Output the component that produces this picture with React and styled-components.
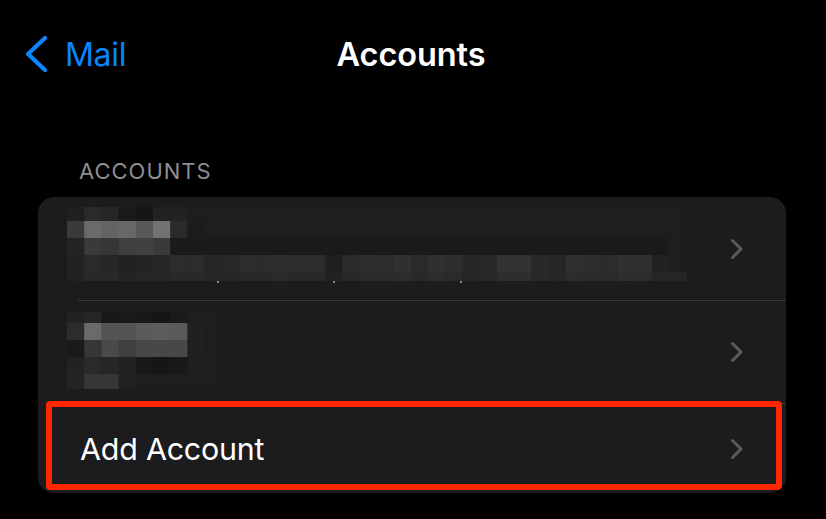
import React from "react";
import styled, { createGlobalStyle } from "styled-components";

const GlobalStyle = createGlobalStyle`
  html, body {
    margin: 0;
    padding: 0;
    background: #000;
  }
  body {
    font-family: "Inter", "Liberation Sans", sans-serif;
    -webkit-font-smoothing: antialiased;
  }
`;

const Screen = styled.div`
  width: 826px;
  height: 519px;
  overflow: hidden;
  background: #000;
  display: flex;
  flex-direction: column;
`;

const NavBar = styled.div`
  height: 108px;
  display: grid;
  grid-template-columns: 1fr auto 1fr;
  align-items: center;
`;

const BackButton = styled.div`
  display: flex;
  align-items: center;
  gap: 17px;
  margin-left: 24px;
  color: #0a84ff;
  font-size: 32px;
  font-weight: 400;
  letter-spacing: -0.3px;
`;

const Title = styled.div`
  color: #fff;
  font-size: 32.5px;
  font-weight: 600;
  letter-spacing: -0.1px;
  margin-right: 4px;
`;

const SectionHeader = styled.div`
  color: #8d8d93;
  font-size: 22px;
  letter-spacing: 1px;
  padding: 50px 0 0 79px;
  line-height: 26px;
`;

const Card = styled.div`
  margin: 13px 40px 0 38px;
  background: #1c1c1e;
  border-radius: 16px;
  overflow: hidden;
  display: flex;
  flex-direction: column;
`;

const Row = styled.div`
  position: relative;
  height: ${(p) => p.$height}px;
  display: flex;
  align-items: center;
  padding: 0 42px 0 ${(p) => (p.$label ? 42 : 29)}px;
`;

const Separator = styled.div`
  height: 1px;
  margin-left: 40px;
  background: #3a3a3c;
`;

const RowBody = styled.div`
  flex: 1;
  align-self: stretch;
  display: flex;
  align-items: ${(p) => (p.$label ? "center" : "flex-start")};
  padding-top: ${(p) => p.$offset || 0}px;
`;

const Label = styled.span`
  color: #fff;
  font-size: 30.4px;
  letter-spacing: -0.2px;
`;

const Highlight = styled.div`
  position: absolute;
  left: 8px;
  right: 4px;
  top: -3px;
  bottom: 3px;
  border: 6px solid #ff2600;
  border-radius: 4px;
  pointer-events: none;
`;

const Chevron = () => (
  <svg width="14" height="22" viewBox="0 0 14 22">
    <path
      d="M2.5 2.5 L11 11 L2.5 19.5"
      fill="none"
      stroke="#5b5b5f"
      strokeWidth="3"
      strokeLinecap="round"
      strokeLinejoin="round"
    />
  </svg>
);

const BackChevron = () => (
  <svg width="24" height="38" viewBox="0 0 24 38">
    <path
      d="M21 3 L4 19 L21 35"
      fill="none"
      stroke="#0a84ff"
      strokeWidth="4.2"
      strokeLinecap="round"
      strokeLinejoin="round"
    />
  </svg>
);

// pixelated (redacted) account details
const CELL = 17.2;

const firstAccount = [
  { h: 14, v: [32, 42, 38, 26, 22, 34, 34, 30, 30, 30, 30, 30, 30, 30, 30, 30, 30, 30, 30, 30, 30, 30, 30, 30, 30, 30, 30, 30, 30, 30, 30, 30, 30, 30, 30, 30] },
  { h: 17, v: [58, 106, 100, 104, 88, 114, 42, 28, 30, 30, 30, 30, 30, 30, 30, 30, 30, 30, 30, 30, 30, 30, 30, 30, 30, 30, 30, 30, 30, 30, 30, 30, 30, 30, 30, 30] },
  { h: 17, v: [36, 58, 54, 64, 64, 58, 26, 26, 27, 26, 26, 26, 27, 26, 26, 26, 27, 26, 26, 26, 26, 27, 26, 26, 26, 26, 26, 27, 26, 26, 26, 26, 26, 27, 26, 30] },
  { h: 17, v: [34, 42, 38, 34, 36, 38, 44, 44, 38, 40, 44, 44, 46, 44, 44, 31, 42, 46, 44, 48, 42, 48, 46, 38, 40, 50, 50, 40, 38, 48, 46, 44, 48, 48, 34, 30] },
  { h: 9, v: [34, 40, 40, 36, 38, 38, 40, 40, 38, 38, 40, 40, 42, 40, 40, 34, 40, 42, 42, 44, 40, 44, 42, 38, 40, 46, 46, 40, 38, 44, 42, 42, 46, 44, 38, 38] },
];

const secondAccount = [
  { h: 11, v: [34, 38, 24, 26, 24, 22, 26, 30, 30] },
  { h: 17, v: [44, 106, 84, 84, 90, 92, 90, 32, 30] },
  { h: 17, v: [26, 54, 74, 64, 72, 72, 72, 32, 30] },
  { h: 17, v: [34, 42, 38, 34, 24, 22, 24, 30, 30] },
  { h: 15, v: [36, 54, 54, 34, 30, 30, 30, 30, 30] },
];

const gray = (n) => `rgb(${n},${n},${n + 2})`;

const Pixelated = ({ rows, dots = [] }) => {
  const cols = rows[0].v.length;
  const width = Math.ceil(cols * CELL);
  const height = rows.reduce((s, r) => s + r.h, 0);
  let y = 0;
  const cells = [];
  rows.forEach((r, ri) => {
    r.v.forEach((n, ci) => {
      cells.push(
        <rect key={`${ri}-${ci}`} x={ci * CELL} y={y} width={CELL + 0.5} height={r.h} fill={gray(n)} />
      );
    });
    y += r.h;
  });
  return (
    <svg width={width} height={height + 3} viewBox={`0 0 ${width} ${height + 3}`}>
      {cells}
      {dots.map((x) => (
        <rect key={x} x={x} y={height} width="2" height="2" fill="#8a8a8e" />
      ))}
    </svg>
  );
};

export default function App() {
  return (
    <>
      <GlobalStyle />
      <Screen>
        <NavBar>
          <BackButton>
            <BackChevron />
            Mail
          </BackButton>
          <Title>Accounts</Title>
          <div />
        </NavBar>
        <SectionHeader>ACCOUNTS</SectionHeader>
        <Card>
          <Row $height={103}>
            <RowBody $offset={10}>
              <Pixelated rows={firstAccount} dots={[150, 266, 393]} />
            </RowBody>
            <Chevron />
          </Row>
          <Separator />
          <Row $height={102}>
            <RowBody $offset={11}>
              <Pixelated rows={secondAccount} />
            </RowBody>
            <Chevron />
          </Row>
          <Separator />
          <Row $height={89} $label>
            <RowBody $label>
              <Label>Add Account</Label>
            </RowBody>
            <Chevron />
            <Highlight />
          </Row>
        </Card>
      </Screen>
    </>
  );
}
